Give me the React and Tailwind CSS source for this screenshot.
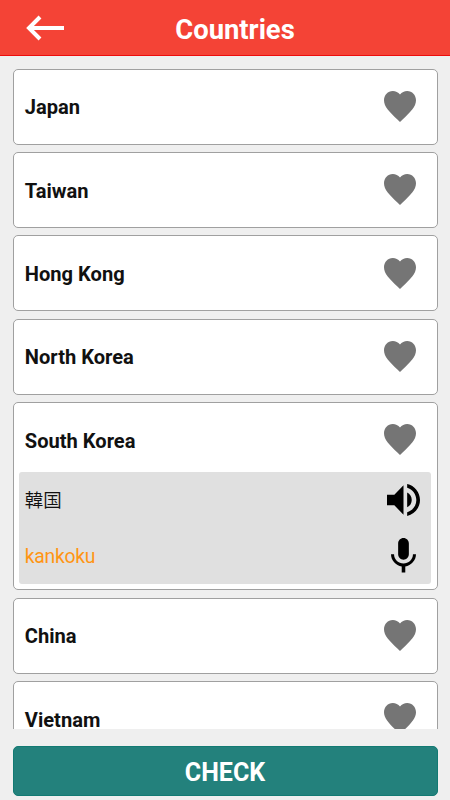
import React from "react";

const countries = [
  { name: "Japan" },
  { name: "Taiwan" },
  { name: "Hong Kong" },
  { name: "North Korea" },
  { name: "South Korea", word: "韓国", reading: "kankoku" },
  { name: "China" },
  { name: "Vietnam" },
];

const BackIcon = () => (
  <svg viewBox="0 0 38 26" className="h-[26px] w-[38px]" fill="none" stroke="#fff" strokeWidth="4">
    <path d="M38 13H4M14 2L3 13l11 11" />
  </svg>
);

const HeartIcon = () => (
  <svg
    viewBox="48 64 416 384"
    preserveAspectRatio="none"
    className="h-[31px] w-8"
    fill="#757575"
  >
    <path d="M256 448l-30.164-27.211C118.718 322.442 48 258.61 48 179.095 48 114.221 97.918 64 162.4 64c36.399 0 70.717 16.742 93.6 43.947C278.882 80.742 313.199 64 349.6 64 414.082 64 464 114.221 464 179.095c0 79.516-70.719 143.348-177.836 241.694L256 448z" />
  </svg>
);

const VolumeIcon = () => (
  <svg
    viewBox="64 64 384 384"
    preserveAspectRatio="none"
    className="h-8 w-[33px]"
    fill="#000"
  >
    <path d="M64 192v128h85.334L256 431.543V80.458L149.334 192H64zm288 64c0-38.399-21.333-72.407-53.333-88.863v176.636C330.667 328.408 352 294.4 352 256zM298.667 64v44.978C360.531 127.632 405.334 186.882 405.334 256c0 69.119-44.803 128.369-106.667 147.022V448C384 428.254 448 349.257 448 256c0-93.256-64-172.254-149.333-192z" />
  </svg>
);

const MicIcon = () => (
  <svg
    viewBox="5 2 14 19"
    preserveAspectRatio="none"
    className="h-[34.5px] w-[25px]"
    fill="#000"
  >
    <path d="M12 14c1.66 0 3-1.34 3-3V5c0-1.66-1.34-3-3-3S9 3.34 9 5v6c0 1.66 1.34 3 3 3zm5.3-3c0 3-2.54 5.1-5.3 5.1S6.7 14 6.7 11H5c0 3.41 2.72 6.23 6 6.72V21h2v-3.28c3.28-.48 6-3.3 6-6.72h-1.7z" />
  </svg>
);

const CountryCard = ({ country }) => (
  <li className="shrink-0 rounded-[5px] border border-[#a0a0a0] bg-white">
    <div className="flex h-[74px] items-center justify-between pr-[20.8px] pl-[11.3px]">
      <span className="pt-[1.5px] text-[20.1px] leading-6 font-bold text-[#111]">{country.name}</span>
      <button type="button" aria-label="Favorite">
        <HeartIcon />
      </button>
    </div>
    {country.word && (
      <div className="mx-[5.3px] -mt-[5px] mb-[5.3px] h-28 rounded-[3px] bg-[#e0e0e0] pl-[6px]">
        <div className="flex h-14 items-center justify-between pr-[11.5px]">
          <span className="pt-[3px] text-[18.5px] font-[350] text-[#111]">{country.word}</span>
          <button type="button" aria-label="Listen">
            <VolumeIcon />
          </button>
        </div>
        <div className="flex h-14 items-center justify-between pr-[15.3px] pb-px">
          <span className="pt-[3px] text-[19.4px] tracking-[-0.3px] text-[#ff9514]">{country.reading}</span>
          <button type="button" aria-label="Speak">
            <MicIcon />
          </button>
        </div>
      </div>
    )}
  </li>
);

const App = () => {
  return (
    <div className="flex h-[800px] w-[450px] flex-col overflow-hidden bg-[#efefef] font-['Roboto','Noto_Sans_CJK_JP',sans-serif]">
      <header className="grid h-14 shrink-0 grid-cols-[1fr_auto_1fr] items-center border-b border-[#ee0c0c] bg-[#f44336]">
        <button type="button" aria-label="Back" className="ml-[26px] justify-self-start">
          <BackIcon />
        </button>
        <h1 className="pt-1 pl-5 text-[27.4px] leading-8 font-bold text-white">Countries</h1>
      </header>

      <ul className="mx-[12.5px] mt-[12.6px] flex h-[660px] shrink-0 flex-col gap-[7.35px] overflow-hidden">
        {countries.map((country) => (
          <CountryCard key={country.name} country={country} />
        ))}
      </ul>

      <button
        type="button"
        className="mx-[12.5px] mt-[17.4px] h-[50px] shrink-0 rounded-[5px] border border-[#127a73] bg-[#23817c] pt-1 text-[25px] leading-8 font-bold text-white"
      >
        CHECK
      </button>
    </div>
  );
};

export default App;
